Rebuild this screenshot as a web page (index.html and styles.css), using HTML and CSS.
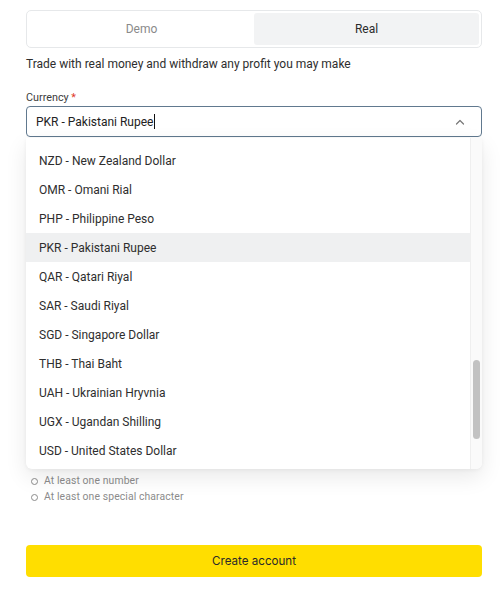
FILE: index.html
```html
<!DOCTYPE html>
<html>
<head>
<meta charset="utf-8">
<link rel="stylesheet" href="styles.css">
</head>
<body>
<div class="page">
  <div class="tabs">
    <div class="tab">Demo</div>
    <div class="tab active">Real</div>
  </div>
  <p class="desc">Trade with real money and withdraw any profit you may make</p>

  <div class="field">
    <label class="label">Currency <span class="req">*</span></label>
    <div class="select-wrap">
      <div class="input">
        <span class="value">PKR - Pakistani Rupee<span class="caret"></span></span>
        <svg class="chev" width="10" height="6" viewBox="0 0 10 6"><path d="M1.5 5 L5 1.5 L8.5 5" fill="none" stroke="#777" stroke-width="1.2" stroke-linecap="round" stroke-linejoin="round"/></svg>
      </div>
      <div class="dropdown">
        <ul class="options">
          <li>NZD - New Zealand Dollar</li>
          <li>OMR - Omani Rial</li>
          <li>PHP - Philippine Peso</li>
          <li class="selected">PKR - Pakistani Rupee</li>
          <li>QAR - Qatari Riyal</li>
          <li>SAR - Saudi Riyal</li>
          <li>SGD - Singapore Dollar</li>
          <li>THB - Thai Baht</li>
          <li>UAH - Ukrainian Hryvnia</li>
          <li>UGX - Ugandan Shilling</li>
          <li>USD - United States Dollar</li>
        </ul>
        <div class="track"><div class="thumb"></div></div>
      </div>
    </div>
  </div>

  <div class="covered"></div>

  <ul class="rules">
    <li>At least one number</li>
    <li>At least one special character</li>
  </ul>

  <button class="submit">Create account</button>
</div>
</body>
</html>
```
FILE: styles.css
```css
* { box-sizing: border-box; }
html, body { margin: 0; padding: 0; background: #fff; }
body {
  font-family: Roboto, "Noto Sans", sans-serif;
  color: #333;
  -webkit-font-smoothing: antialiased;
}
.page {
  width: 456px;
  margin: 10px 0 0 26px;
  display: flex;
  flex-direction: column;
}
.tabs {
  display: flex;
  border: 1px solid #e6e8ea;
  border-radius: 5px;
  padding: 2px;
  height: 38px;
}
.tab {
  flex: 1;
  display: flex;
  align-items: center;
  justify-content: center;
  font-size: 12px;
  color: #8a8a8a;
  border-radius: 3px;
}
.tab.active {
  background: #f2f3f4;
  color: #2b2b2b;
}
.desc {
  margin: 8px 0 0;
  font-size: 12px;
  line-height: 16px;
  color: #2e2e2e;
}
.field { margin-top: 19px; display: flex; flex-direction: column; }
.label {
  font-size: 10.8px;
  line-height: 14px;
  color: #3c3c3c;
  margin-bottom: 1px;
}
.req { color: #e0392b; }
.select-wrap { position: relative; }
.input {
  height: 31px;
  border: 1px solid #61798f;
  border-radius: 4px;
  display: flex;
  align-items: center;
  justify-content: space-between;
  padding: 0 16px 0 9px;
}
.value {
  font-size: 12px;
  color: #222;
  display: flex;
  align-items: center;
}
.caret {
  display: inline-block;
  width: 1px;
  height: 15px;
  background: #111;
  margin-left: 1px;
}
.chev { display: block; }
.dropdown {
  position: absolute;
  left: 0;
  right: 0;
  top: 32px;
  height: 331px;
  background: #fff;
  border-radius: 0 0 6px 6px;
  box-shadow: 0 8px 22px rgba(0, 0, 0, 0.09), 0 1px 4px rgba(0, 0, 0, 0.05);
  display: flex;
  overflow: hidden;
  z-index: 5;
}
.options {
  list-style: none;
  margin: 0;
  padding: 8px 0 0;
  flex: 1;
}
.options li {
  height: 29px;
  display: flex;
  align-items: center;
  padding-left: 13px;
  font-size: 12px;
  color: #2e2e2e;
}
.options li.selected { background: #eff0f1; }
.track {
  width: 12px;
  border-left: 1px solid #efefef;
  background: #fafafa;
  padding: 222px 0 0 2px;
}
.thumb {
  width: 7px;
  height: 79px;
  border-radius: 4px;
  background: #c2c2c2;
}
.covered { height: 336px; }
.rules {
  list-style: none;
  margin: 0;
  padding: 0 0 0 5px;
}
.rules li {
  font-size: 10.4px;
  line-height: 16px;
  color: #8b8b8b;
  display: flex;
  align-items: center;
  letter-spacing: 0.1px;
}
.rules li::before {
  content: "";
  width: 5px;
  height: 5px;
  border: 1px solid #8b8b8b;
  border-radius: 50%;
  margin-right: 6px;
}
.submit {
  margin-top: 40px;
  height: 32px;
  border: none;
  border-radius: 4px;
  background: #ffde00;
  font-family: Inter, sans-serif;
  font-size: 11.6px;
  color: #2a2a2a;
}
```
